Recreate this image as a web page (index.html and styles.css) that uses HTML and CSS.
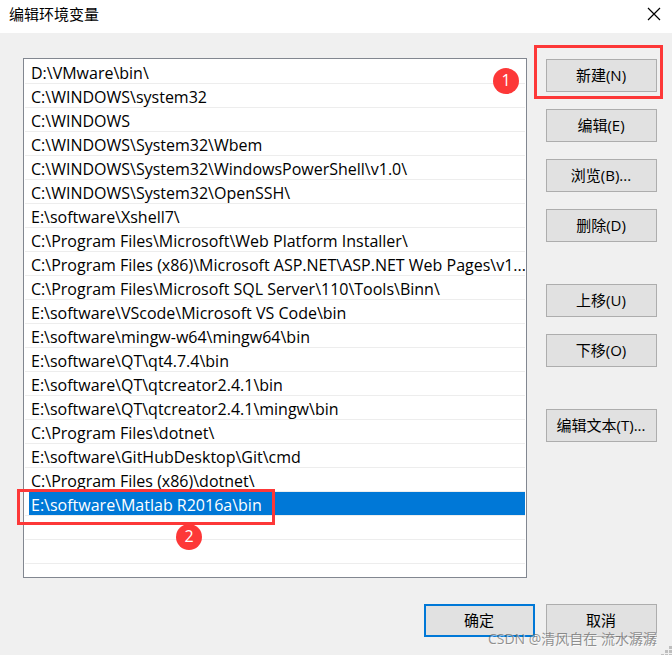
FILE: index.html
```html
<!DOCTYPE html>
<html lang="zh-CN">
<head>
<meta charset="utf-8">
<meta name="viewport" content="width=device-width, initial-scale=1">
<title>编辑环境变量</title>
<link rel="stylesheet" href="styles.css">
</head>
<body>
<main class="dialog">
  <header class="titlebar">
    <h1 class="title">编辑环境变量</h1>
    <button class="close" type="button" aria-label="关闭">
      <svg width="14" height="14" viewBox="0 0 14 14"><path d="M1 1L13 13M13 1L1 13" fill="none" stroke="#000" stroke-width="1.2"/></svg>
    </button>
  </header>
  <div class="content">
    <div class="list">
      <ul class="rows">
        <li class="row"><span class="path">D:\VMware\bin\</span></li>
        <li class="row"><span class="path">C:\WINDOWS\system32</span></li>
        <li class="row"><span class="path">C:\WINDOWS</span></li>
        <li class="row"><span class="path">C:\WINDOWS\System32\Wbem</span></li>
        <li class="row"><span class="path">C:\WINDOWS\System32\WindowsPowerShell\v1.0\</span></li>
        <li class="row"><span class="path">C:\WINDOWS\System32\OpenSSH\</span></li>
        <li class="row"><span class="path">E:\software\Xshell7\</span></li>
        <li class="row"><span class="path">C:\Program Files\Microsoft\Web Platform Installer\</span></li>
        <li class="row"><span class="path">C:\Program Files (x86)\Microsoft ASP.NET\ASP.NET Web Pages\v1...</span></li>
        <li class="row"><span class="path">C:\Program Files\Microsoft SQL Server\110\Tools\Binn\</span></li>
        <li class="row"><span class="path">E:\software\VScode\Microsoft VS Code\bin</span></li>
        <li class="row"><span class="path">E:\software\mingw-w64\mingw64\bin</span></li>
        <li class="row"><span class="path">E:\software\QT\qt4.7.4\bin</span></li>
        <li class="row"><span class="path">E:\software\QT\qtcreator2.4.1\bin</span></li>
        <li class="row"><span class="path">E:\software\QT\qtcreator2.4.1\mingw\bin</span></li>
        <li class="row"><span class="path">C:\Program Files\dotnet\</span></li>
        <li class="row"><span class="path">E:\software\GitHubDesktop\Git\cmd</span></li>
        <li class="row"><span class="path">C:\Program Files (x86)\dotnet\</span></li>
        <li class="row selected"><span class="path">E:\software\Matlab R2016a\bin</span><span class="frame frame-row"></span><span class="badge badge-row">2</span></li>
        <li class="row"></li>
        <li class="row"></li>
      </ul>
      <span class="badge badge-new">1</span>
    </div>
    <div class="actions">
      <div class="group">
        <div class="marked"><button class="btn" type="button">新建(N)</button><span class="frame frame-new"></span></div>
        <button class="btn" type="button">编辑(E)</button>
        <button class="btn" type="button">浏览(B)...</button>
        <button class="btn" type="button">删除(D)</button>
      </div>
      <div class="group">
        <button class="btn" type="button">上移(U)</button>
        <button class="btn" type="button">下移(O)</button>
      </div>
      <div class="group">
        <button class="btn" type="button">编辑文本(T)...</button>
      </div>
    </div>
  </div>
  <footer class="footer">
    <button class="btn primary" type="button">确定</button>
    <button class="btn" type="button">取消</button>
  </footer>
  <span class="watermark">CSDN @清风自在 流水潺潺</span>
  <svg class="grip" width="11" height="9" viewBox="0 0 11 9" fill="#bfbfbf"><path d="M8 0h3v3h-3zM4 4h3v3h-3zM8 4h3v3h-3zM0 8h3v1h-3zM4 8h3v1h-3zM8 8h3v1h-3z"/></svg>
</main>
</body>
</html>
```
FILE: styles.css
```css
* {
  box-sizing: border-box;
}

body {
  margin: 0;
  font-family: "Open Sans", "Noto Sans CJK SC", sans-serif;
  font-size: 15px;
  color: #000;
}

.dialog {
  position: relative;
  display: flex;
  flex-direction: column;
  min-height: 100vh;
  background: #f0f0f0;
  overflow: hidden;
}

.titlebar {
  display: flex;
  align-items: center;
  justify-content: space-between;
  height: 33px;
  padding: 0 11px 5px 9px;
  background: #fff;
}

.title {
  margin: 0;
  font-size: 15px;
  font-weight: 400;
  line-height: 24px;
}

.close {
  display: flex;
  padding: 0;
  border: 0;
  background: none;
}

.content {
  display: flex;
  flex: 1;
  gap: 19px;
  padding: 25px 15px 26px 23px;
}

.list {
  position: relative;
  flex: 1;
  min-width: 0;
  padding: 1px;
  border: 1px solid #828790;
  background: #fff;
}

.rows {
  margin: 0;
  padding: 0;
  list-style: none;
}

.row {
  position: relative;
  height: 24px;
  padding-left: 4px;
  border-bottom: 1px solid #ededed;
  font-size: 16px;
}

.path {
  display: block;
  height: 23px;
  padding-left: 2px;
  line-height: 26px;
  white-space: nowrap;
  overflow: hidden;
}

.selected .path {
  background: #0078d7;
  color: #fff;
}

.actions {
  display: flex;
  flex-direction: column;
  gap: 42px;
  width: 111px;
  padding-top: 1px;
}

.group {
  display: flex;
  flex-direction: column;
  gap: 17px;
}

.marked {
  position: relative;
  display: flex;
  flex-direction: column;
}

.btn {
  height: 33px;
  padding: 0 1px 2px 0;
  border: 1px solid #adadad;
  background: #e1e1e1;
  color: #000;
  font: inherit;
  line-height: 24px;
  white-space: nowrap;
}

.footer {
  display: flex;
  justify-content: flex-end;
  gap: 11px;
  padding: 0 15px 18px;
}

.footer .btn {
  width: 111px;
}

.footer .primary {
  border: 2px solid #0078d7;
}

.frame {
  position: absolute;
  border: 3px solid #fd3838;
  pointer-events: none;
}

.frame-new {
  inset: -14px -6px -7px -12px;
}

.frame-row {
  top: -3px;
  left: -8px;
  width: 258px;
  height: 36px;
}

.badge {
  position: absolute;
  z-index: 1;
  width: 26px;
  height: 26px;
  border-radius: 50%;
  background: #fd3838;
  color: #fff;
  font-size: 16px;
  line-height: 24px;
  text-align: center;
}

.badge-new {
  top: 9px;
  right: 7px;
}

.badge-row {
  top: 32px;
  left: 151px;
}

.watermark {
  position: absolute;
  right: 15px;
  bottom: 6px;
  color: rgba(110, 110, 110, 0.75);
  font-size: 14px;
  line-height: 20px;
  text-shadow: 1px 1px 0 rgba(255, 255, 255, 0.6);
  white-space: nowrap;
}

.grip {
  position: absolute;
  right: 0;
  bottom: 0;
}
```
